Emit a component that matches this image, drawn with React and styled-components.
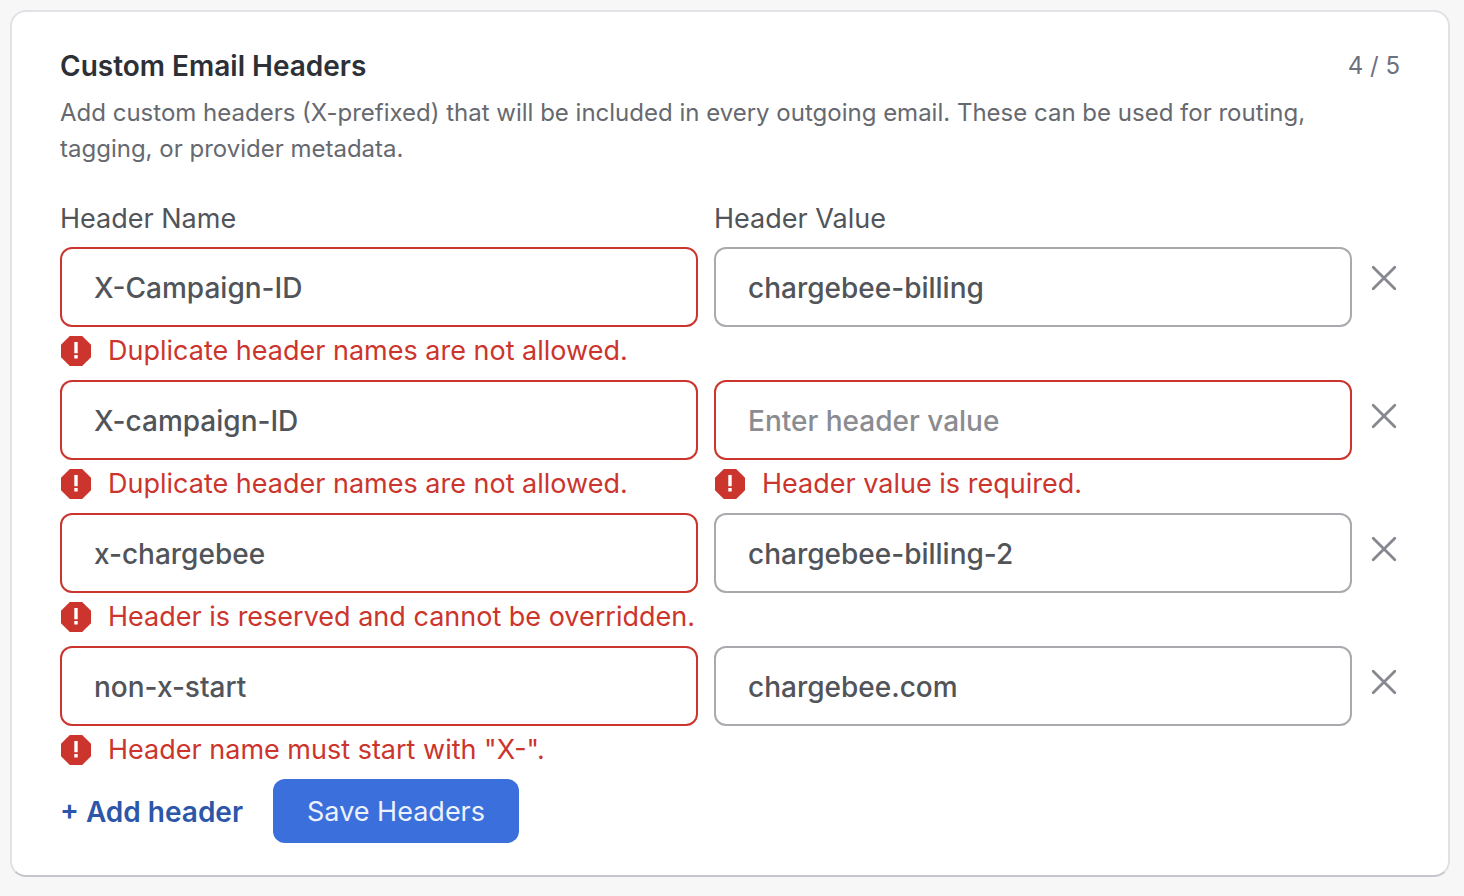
import React, { useState } from 'react'
import styled, { createGlobalStyle } from "styled-components";

const MAX_HEADERS = 5;

const initialHeaders = [
  { id: 1, name: "X-Campaign-ID", value: "chargebee-billing", nameError: "Duplicate header names are not allowed." },
  { id: 2, name: "X-campaign-ID", value: "", nameError: "Duplicate header names are not allowed.", valueError: "Header value is required." },
  { id: 3, name: "x-chargebee", value: "chargebee-billing-2", nameError: "Header is reserved and cannot be overridden." },
  { id: 4, name: "non-x-start", value: "chargebee.com", nameError: 'Header name must start with "X-".' },
];

const ErrorIcon = () => (
  <svg width="32" height="32" viewBox="0 0 32 32" aria-hidden="true">
    <path d="M9.8 1h12.4l8.8 8.8v12.4L22.2 31H9.8L1 22.2V9.8z" fill="#cb352d" />
    <path d="M14.3 7h3.4v11.2h-3.4zM14.3 20h3.4v3.6h-3.4z" fill="#fff" />
  </svg>
);

const CloseIcon = () => (
  <svg width="32" height="32" viewBox="0 0 32 32" aria-hidden="true">
    <path d="M5.2 5.2l21.6 21.6M26.8 5.2L5.2 26.8" fill="none" stroke="#87888f" strokeWidth="2.8" strokeLinecap="round" />
  </svg>
);

const HeaderField = ({ id, label, showLabel, error, ...rest }) => (
  <Field>
    {showLabel && <Label htmlFor={id}>{label}</Label>}
    <Input id={id} aria-label={label} $invalid={!!error} aria-invalid={!!error} {...rest} />
    {error && (
      <ErrorText>
        <ErrorIcon />
        {error}
      </ErrorText>
    )}
  </Field>
);

const App = () => {
  const [headers, setHeaders] = useState(initialHeaders);

  const handleChange = (id, key, val) => {
    setHeaders(headers.map((h) => (h.id === id ? { ...h, [key]: val } : h)));
  };

  const removeHeader = (id) => setHeaders(headers.filter((h) => h.id !== id));

  const addHeader = () => {
    if (headers.length >= MAX_HEADERS) return;
    setHeaders([...headers, { id: Date.now(), name: "", value: "" }]);
  };

  return (
    <>
      <GlobalStyle />
      <Card>
        <TitleRow>
          <Title>Custom Email Headers</Title>
          <Count>{headers.length} / {MAX_HEADERS}</Count>
        </TitleRow>
        <Description>
          Add custom headers (X-prefixed) that will be included in every outgoing email. These can be used for routing, tagging, or provider metadata.
        </Description>
        <form onSubmit={(e) => e.preventDefault()}>
          {headers.map((h, index) => (
            <Row key={h.id}>
              <HeaderField
                id={`name-${h.id}`}
                label="Header Name"
                showLabel={index === 0}
                placeholder="Enter header name"
                value={h.name}
                error={h.nameError}
                onChange={(e) => handleChange(h.id, "name", e.target.value)}
              />
              <HeaderField
                id={`value-${h.id}`}
                label="Header Value"
                showLabel={index === 0}
                placeholder="Enter header value"
                value={h.value}
                error={h.valueError}
                onChange={(e) => handleChange(h.id, "value", e.target.value)}
              />
              <RemoveButton type="button" aria-label="Remove header" $first={index === 0} onClick={() => removeHeader(h.id)}>
                <CloseIcon />
              </RemoveButton>
            </Row>
          ))}
          <Actions>
            <AddButton type="button" onClick={addHeader}>+ Add header</AddButton>
            <SaveButton type="submit">Save Headers</SaveButton>
          </Actions>
        </form>
      </Card>
    </>
  )
}

export default App;

const GlobalStyle = createGlobalStyle`
* {
  box-sizing: border-box;
}
body {
  margin: 0;
  background: #f7f7f7;
  font-family: Inter, "Liberation Sans", sans-serif;
  font-optical-sizing: none;
  color: #515459;
}
button, input {
  font: inherit;
  font-optical-sizing: none;
}
`;

const Card = styled.main`
  margin: 10px 14px 18px 10px;
  padding: 34px 48px 32px;
  background: #fff;
  border: 2px solid #e1e1e6;
  border-bottom-color: #c5c5cc;
  border-radius: 16px;
`;

const TitleRow = styled.div`
  display: flex;
  justify-content: space-between;
  align-items: center;
`;

const Title = styled.h1`
  margin: 0;
  font-size: 28px;
  line-height: 40px;
  font-weight: 600;
  color: #2d3036;
`;

const Count = styled.span`
  font-size: 24px;
  line-height: 40px;
  color: #6e7180;
`;

const Description = styled.p`
  margin: 9px 0 32px;
  max-width: 1260px;
  font-size: 24px;
  line-height: 36px;
  color: #66696f;
`;

const Row = styled.div`
  display: grid;
  grid-template-columns: 1fr 1fr 32px;
  gap: 16px;
  align-items: start;
`;

const Field = styled.div`
  display: flex;
  flex-direction: column;
  min-width: 0;
`;

const Label = styled.label`
  padding-bottom: 8px;
  font-size: 27px;
  line-height: 40px;
`;

const Input = styled.input`
  width: 100%;
  height: 80px;
  padding: 2px 32px 0;
  border: 2px solid ${(p) => (p.$invalid ? "#cb352d" : "#a9a9ae")};
  border-radius: 12px;
  background: #fff;
  outline: none;
  font-size: 28px;
  font-weight: 500;
  color: #515459;

  &::placeholder {
    color: #8b8c92;
    opacity: 1;
  }
`;

const ErrorText = styled.div`
  display: flex;
  align-items: center;
  gap: 16px;
  height: 53px;
  padding-bottom: 6px;
  font-size: 27px;
  white-space: nowrap;
  color: #cb352d;

  svg {
    flex-shrink: 0;
  }
`;

const RemoveButton = styled.button`
  display: flex;
  margin-top: ${(p) => (p.$first ? "63px" : "20px")};
  padding: 0;
  border: none;
  background: none;
  cursor: pointer;
`;

const Actions = styled.div`
  display: flex;
  align-items: center;
  gap: 30px;
`;

const AddButton = styled.button`
  padding: 2px 0 0;
  border: none;
  background: none;
  font-size: 28px;
  font-weight: 600;
  color: #2c56a9;
  cursor: pointer;
`;

const SaveButton = styled.button`
  height: 64px;
  padding: 0 34px;
  border: none;
  border-radius: 12px;
  background: #3b6fdc;
  font-size: 27px;
  color: #ecf1fc;
  cursor: pointer;
`;
